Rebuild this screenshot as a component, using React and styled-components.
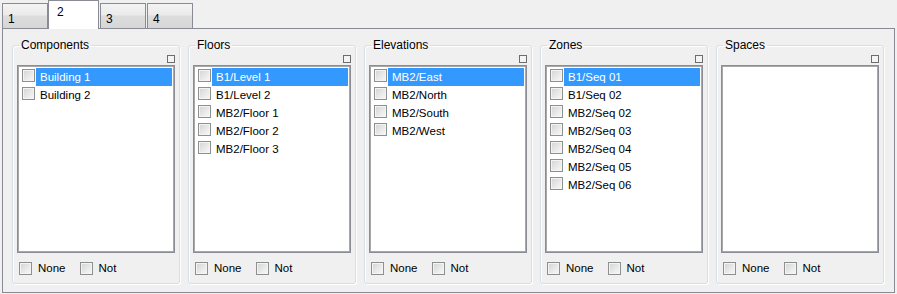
import React from "react";
import styled, { createGlobalStyle } from "styled-components";

const GlobalStyle = createGlobalStyle`
  html, body { margin: 0; padding: 0; background: #f0f0f0; }
  body { font-family: "Liberation Sans", Arial, sans-serif; color: #000; }
`;

const Window = styled.div`
  width: 897px;
  height: 294px;
  box-sizing: border-box;
  padding-left: 2px;
  background: #f0f0f0;
`;

const TabStrip = styled.div`
  display: flex;
  align-items: flex-end;
  height: 28px;
  position: relative;
  z-index: 1;
`;

const Tab = styled.div`
  box-sizing: border-box;
  width: ${(p) => (p.$active ? "51px" : "46px")};
  height: ${(p) => (p.$active ? "29px" : "25px")};
  margin-bottom: ${(p) => (p.$active ? "-1px" : "0")};
  border: 1px solid #898c95;
  border-bottom: none;
  background: ${(p) =>
    p.$active
      ? "#ffffff"
      : "linear-gradient(#f3f3f3 0%, #ebebeb 45%, #dddddd 50%, #d6d6d6 100%)"};
  font-size: 12px;
  line-height: 14px;
  padding: ${(p) => (p.$active ? "4px 0 0 8px" : "8px 0 0 5px")};
  margin-right: ${(p) => (p.$spaced ? "1px" : "0")};
`;

const Panel = styled.div`
  box-sizing: border-box;
  width: 893px;
  height: 265px;
  border: 1px solid #898c95;
  background: #f0f0f0;
  display: flex;
  gap: 8px;
  padding: 8px 0 7px 9px;
`;

const Group = styled.fieldset`
  box-sizing: border-box;
  width: 168px;
  height: 247px;
  margin: 0;
  padding: 2px 4px 0 4px;
  border: 1px solid #d5dfe5;
  border-radius: 3px;
  box-shadow: inset 1px 1px 0 #ffffff, 1px 1px 0 #ffffff;
  min-width: 0;
`;

const Legend = styled.legend`
  font-size: 12px;
  line-height: 16px;
  height: 16px;
  padding: 0 2px;
  margin-left: 2px;
`;

const Body = styled.div`
  display: flex;
  flex-direction: column;
`;

const CornerButton = styled.div`
  box-sizing: border-box;
  align-self: flex-end;
  width: 8px;
  height: 8px;
  border: 1px solid #6d6d6d;
  background: #f4f4f4;
`;

const ListBox = styled.div`
  box-sizing: border-box;
  margin-top: 2px;
  width: 158px;
  height: 188px;
  border: 1px solid #8a8d93;
  box-shadow: inset 0 0 0 1px #a8a8a8;
  padding: 2px;
  background: #ffffff;
`;

const Row = styled.div`
  display: flex;
  align-items: flex-start;
  height: 18px;
`;

const Check = styled.span`
  box-sizing: border-box;
  flex: none;
  display: block;
  width: 13px;
  height: 13px;
  margin: ${(p) => p.$m || "0"};
  border: 1px solid #8e8f8f;
  box-shadow: inset 0 0 0 1px #f4f4f4;
  background: linear-gradient(135deg, #d0d2d6 0%, #e9e9ea 55%, #f8f8f8 100%);
`;

const ItemLabel = styled.span`
  flex: 1;
  height: 18px;
  margin-left: 1px;
  padding-left: 4px;
  font-size: 11.5px;
  line-height: 18px;
  white-space: nowrap;
  background: ${(p) => (p.$selected ? "#3399ff" : "transparent")};
  color: ${(p) => (p.$selected ? "#ffffff" : "#000000")};
`;

const Footer = styled.div`
  display: flex;
  align-items: center;
  margin-top: 9px;
  height: 13px;
  padding-left: 2px;
`;

const FooterLabel = styled.span`
  font-size: 11.5px;
  line-height: 13px;
  margin: 0 14px 0 6px;
`;

const groups = [
  { title: "Components", items: ["Building 1", "Building 2"], selected: 0 },
  {
    title: "Floors",
    items: ["B1/Level 1", "B1/Level 2", "MB2/Floor 1", "MB2/Floor 2", "MB2/Floor 3"],
    selected: 0,
  },
  {
    title: "Elevations",
    items: ["MB2/East", "MB2/North", "MB2/South", "MB2/West"],
    selected: 0,
  },
  {
    title: "Zones",
    items: [
      "B1/Seq 01",
      "B1/Seq 02",
      "MB2/Seq 02",
      "MB2/Seq 03",
      "MB2/Seq 04",
      "MB2/Seq 05",
      "MB2/Seq 06",
    ],
    selected: 0,
  },
  { title: "Spaces", items: [], selected: -1 },
];

export default function App() {
  return (
    <>
      <GlobalStyle />
      <Window>
        <TabStrip>
          <Tab>1</Tab>
          <Tab $active $spaced>2</Tab>
          <Tab $spaced>3</Tab>
          <Tab>4</Tab>
        </TabStrip>
        <Panel>
          {groups.map((g) => (
            <Group key={g.title}>
              <Legend>{g.title}</Legend>
              <Body>
                <CornerButton />
                <ListBox>
                  {g.items.map((it, i) => (
                    <Row key={it}>
                      <Check $m="1px 0 0 2px" />
                      <ItemLabel $selected={i === g.selected}>{it}</ItemLabel>
                    </Row>
                  ))}
                </ListBox>
                <Footer>
                  <Check />
                  <FooterLabel>None</FooterLabel>
                  <Check />
                  <FooterLabel>Not</FooterLabel>
                </Footer>
              </Body>
            </Group>
          ))}
        </Panel>
      </Window>
    </>
  );
}
